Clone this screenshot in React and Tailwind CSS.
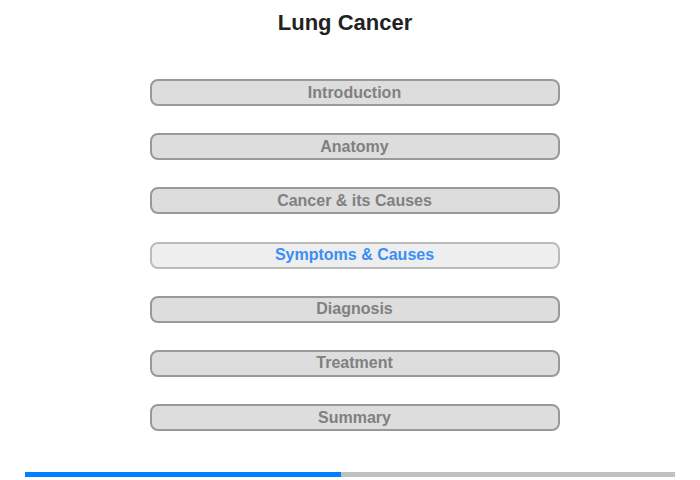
const sections = [
    'Introduction',
    'Anatomy',
    'Cancer & its Causes',
    'Symptoms & Causes',
    'Diagnosis',
    'Treatment',
    'Summary'
];

const active = 3;

const App = () => {
    return (
        <div className="w-[700px] h-[480px] bg-white flex flex-col items-center font-['Liberation_Sans',Arial,sans-serif]">
            <h1 className="mt-[9px] mr-[10px] text-[22px] leading-[28px] font-bold text-[#222]">Lung Cancer</h1>

            <div className="mt-[42px] ml-[9px] flex flex-col gap-[27.2px]">
                {sections.map((name, i) => (
                    <button
                        key={name}
                        className={
                            i === active
                                ? 'w-[410px] h-[27px] rounded-[8px] border-2 border-[#bbbbbb] bg-[#eeeeee] text-[#3b8ef5] text-[16px] font-bold leading-none'
                                : 'w-[410px] h-[27px] rounded-[8px] border-2 border-[#999999] bg-[#dddddd] text-[#808080] text-[16px] font-bold leading-none'
                        }>
                        {name}
                    </button>
                ))}
            </div>

            <div className="mt-[41px] w-[650px] h-[5px] bg-[#c0c0c0] flex">
                <div className="w-[316px] h-full bg-[#0080ff]"></div>
            </div>
        </div>
    );
};

export default App;
